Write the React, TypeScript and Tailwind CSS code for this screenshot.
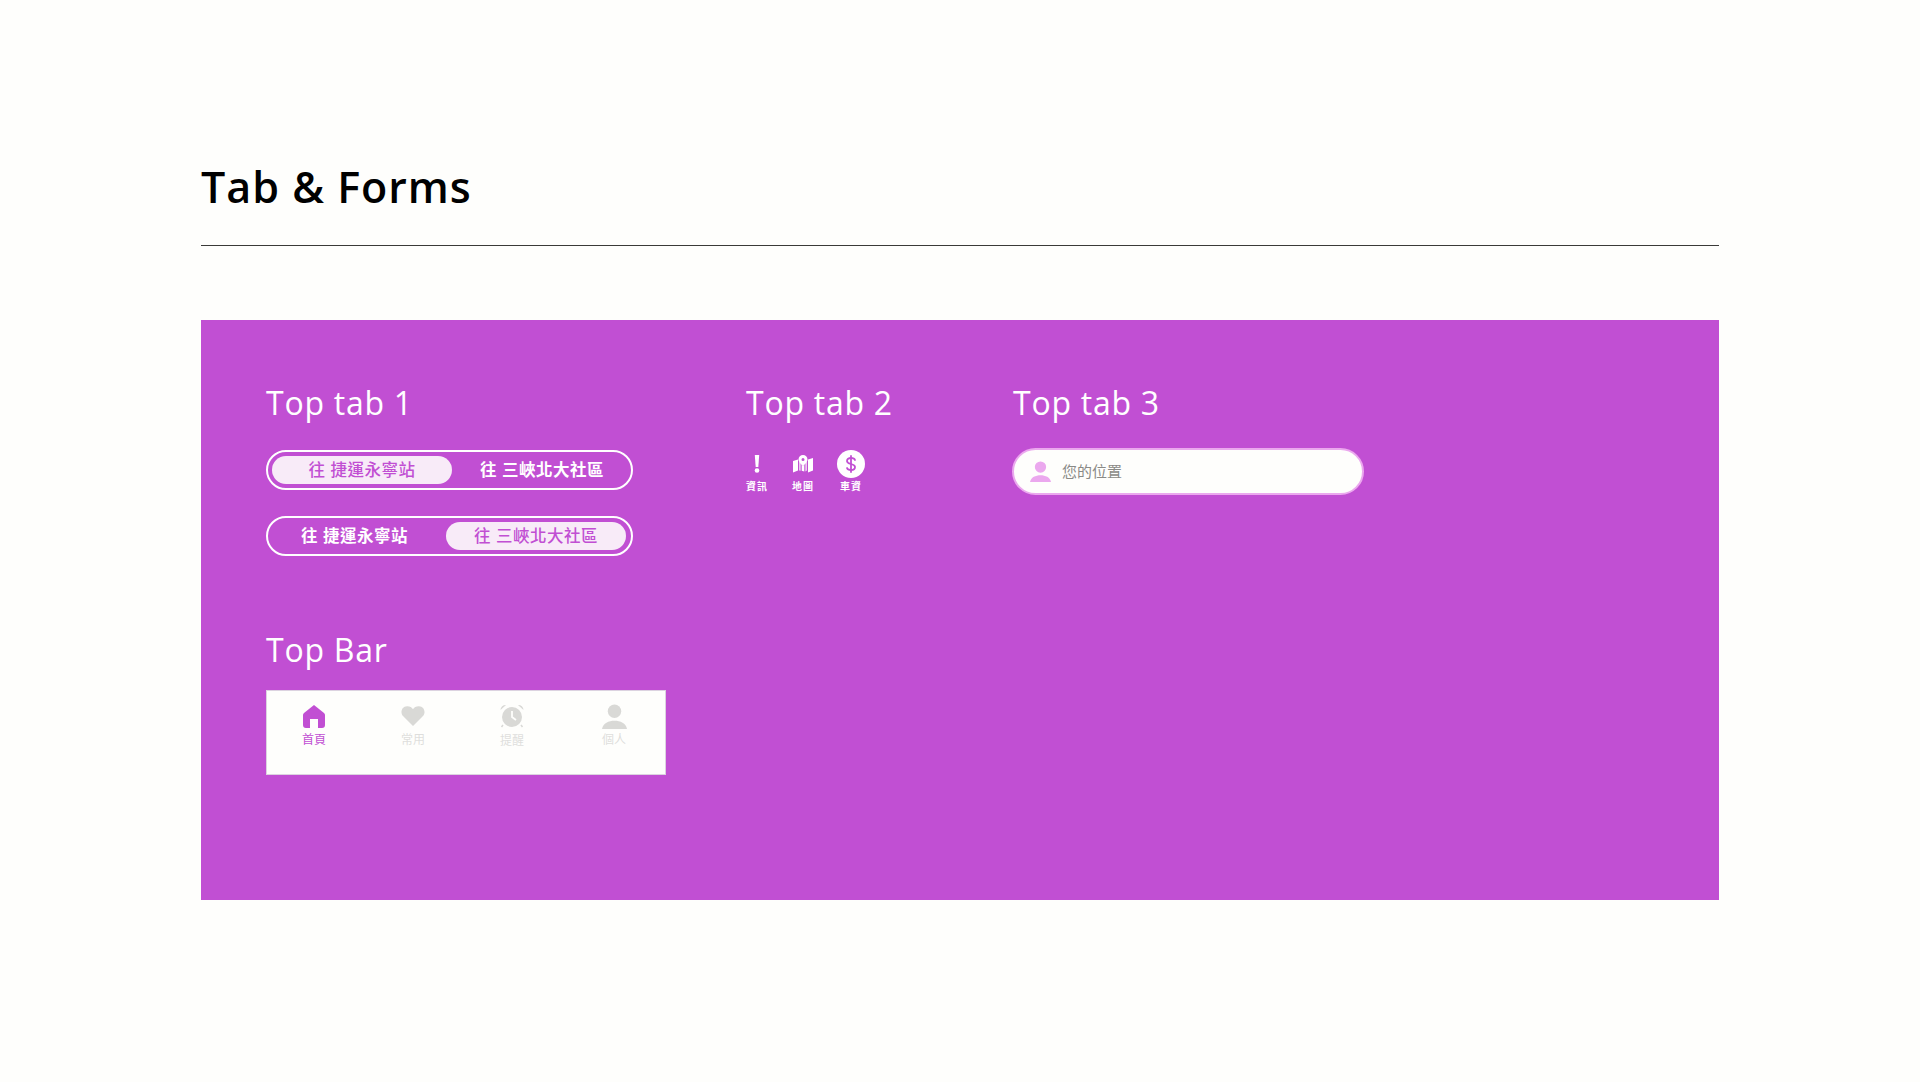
const cjk = "font-['Open_Sans','Noto_Sans_CJK_TC',sans-serif]";

function RouteTabs({ active }: { active: 0 | 1 }) {
  const labels = ["往 捷運永寧站", "往 三峽北大社區"];
  return (
    <div className="flex h-10 w-[367px] items-center rounded-full border-2 border-white px-1">
      {labels.map((label, i) =>
        i === active ? (
          <div
            key={label}
            className={`flex h-7 w-[180px] shrink-0 items-center justify-center rounded-full bg-[#f8ebf8] text-[16.5px] font-medium tracking-[0.5px] text-[#c14fd3] ${i === 1 ? "-ml-[3px]" : ""}`}
          >
            {label}
          </div>
        ) : (
          <div
            key={label}
            className={`flex h-7 w-[180px] shrink-0 items-center justify-center text-[16.5px] font-bold tracking-[0.5px] text-white ${i === 0 ? "-ml-[3px] pr-[9px]" : ""}`}
          >
            {label}
          </div>
        ),
      )}
    </div>
  );
}

function HomeIcon() {
  return (
    <svg width="22" height="23" viewBox="0 0 22 23" fill="#c14fd3">
      <path d="M11 0 L21 8 Q22 9 22 10 V20 Q22 23 19 23 H15 V14 H7 V23 H3 Q0 23 0 20 V10 Q0 9 1 8 Z" />
    </svg>
  );
}

function HeartIcon() {
  return (
    <svg width="24" height="20" viewBox="0 0 24 20" fill="#d9d9d6">
      <path d="M12 20 L2 10 C-1 6.500 0.500 0.500 6 0.200 C8.500 0 10.800 1.200 12 3.200 C13.200 1.200 15.500 0 18 0.200 C23.500 0.500 25 6.500 22 10 Z" />
    </svg>
  );
}

function AlarmIcon() {
  return (
    <svg width="24" height="24" viewBox="0 0 24 24">
      <circle cx="12" cy="13" r="10" fill="#d9d9d6" />
      <path d="M0.500 6 A5 5 0 0 1 6 1 Z M23.500 6 A5 5 0 0 0 18 1 Z" fill="#d9d9d6" />
      <path d="M3 21 L1.500 23 M21 21 L22.500 23" stroke="#d9d9d6" strokeWidth="1.500" />
      <path d="M12 7 V13 L16 16" stroke="#fefefc" strokeWidth="1.800" fill="none" />
    </svg>
  );
}

function PersonIcon({ color, size }: { color: string; size: number }) {
  return (
    <svg width={size} height={size} viewBox="0 0 26 26" fill={color}>
      <circle cx="13" cy="7.500" r="7" />
      <path d="M0 26 C1 20 7 17.500 13 17.500 C19 17.500 25 20 26 26 Z" />
    </svg>
  );
}

function InfoTabs() {
  return (
    <div className="mt-[25px] -ml-px flex items-start text-white">
      <div className="flex w-[24px] flex-col items-center">
        <div className="flex h-7 items-center">
          <svg width="6" height="18" viewBox="0 0 6 18" fill="#fff">
            <path d="M0.800 0 H5.200 L4.300 12 H1.700 Z" />
            <circle cx="3" cy="15.500" r="2.300" />
          </svg>
        </div>
        <span className="mt-[2px] text-[10px] leading-[12px] font-bold tracking-[1px]">資訊</span>
      </div>
      <div className="ml-[22px] flex w-[24px] flex-col items-center">
        <div className="flex h-7 items-center">
          <svg width="20" height="18" viewBox="0 0 20 18" fill="#fff">
            <path d="M0 6 L5 4.500 V15.500 L0 17.500 Z M6.300 6 L7.500 7 V15.800 L6.300 15.500 Z M8.700 9 L10 11 L11.300 9 V16.500 L8.700 15.800 Z M12.500 7 L13.700 6 V15.500 L12.500 16.500 Z M15 4.500 L20 3 V15.500 L15 17.500 Z" />
            <path fillRule="evenodd" d="M10 0 A4.500 4.500 0 0 1 14.500 4.500 C14.500 7 11.500 9.500 10 11 C8.500 9.500 5.500 7 5.500 4.500 A4.500 4.500 0 0 1 10 0 Z M10 3 A1.500 1.500 0 1 0 10 6 A1.500 1.500 0 1 0 10 3 Z" />
          </svg>
        </div>
        <span className="mt-[2px] text-[10px] leading-[12px] font-bold tracking-[1px]">地圖</span>
      </div>
      <div className="ml-[22px] flex w-[28px] flex-col items-center">
        <div className="flex h-7 w-7 items-center justify-center rounded-full bg-white">
          <svg width="12" height="18" viewBox="0 0 12 18" fill="none" stroke="#c14fd3" strokeWidth="1.800" strokeLinecap="round">
            <path d="M6 1 V17" />
            <path d="M10 5 C9.500 3.500 8 3 6 3 C3.500 3 2 4.200 2 6 C2 10 10 8 10 12 C10 13.800 8.500 15 6 15 C4 15 2.500 14.500 2 13" />
          </svg>
        </div>
        <span className="mt-[2px] text-[10px] leading-[12px] font-bold tracking-[1px]">車資</span>
      </div>
    </div>
  );
}

function TopBar() {
  const items = [
    { label: "首頁", icon: <HomeIcon />, color: "text-[#c14fd3]", gap: "mt-[5px]", ml: "" },
    { label: "常用", icon: <HeartIcon />, color: "text-[#dededc]", gap: "mt-[5px]", ml: "ml-[49px]" },
    { label: "提醒", icon: <AlarmIcon />, color: "text-[#dededc]", gap: "mt-[6px]", ml: "ml-[49px]" },
    { label: "個人", icon: <PersonIcon color="#d9d9d6" size={25} />, color: "text-[#dededc]", gap: "mt-[5px]", ml: "ml-[52px]" },
  ];
  return (
    <div className="mt-[18px] flex h-[85px] w-[400px] items-start border border-[#dcd3e0] bg-[#fefefc] pt-[13px] pl-[22px]">
      {items.map((item) => (
        <div key={item.label} className={`flex w-[50px] flex-col items-center ${item.ml}`}>
          <div className="flex h-[24px] items-center">{item.icon}</div>
          <span className={`${item.gap} text-[12px] leading-[14px] font-normal ${item.color}`}>{item.label}</span>
        </div>
      ))}
    </div>
  );
}

export default function App() {
  return (
    <div className={`flex min-h-[1082px] flex-col bg-[#fefefc] px-[201px] pt-[157px] ${cjk}`}>
      <h1 className="text-[43px] leading-[60px] font-semibold tracking-[1px] text-black">Tab &amp; Forms</h1>
      <div className="mt-[28px] h-px bg-[#3a3a38]" />

      <div className="mt-[74px] h-[580px] bg-[#c14fd3] pt-[61px] pl-[65px]">
        <div className="flex items-start">
          <div className="w-[480px]">
            <h2 className="text-[32px] leading-[44px] font-normal tracking-[0.75px] text-white">Top tab 1</h2>
            <div className="mt-[25px] flex flex-col gap-[26px]">
              <RouteTabs active={0} />
              <RouteTabs active={1} />
            </div>
          </div>
          <div className="w-[267px]">
            <h2 className="text-[32px] leading-[44px] font-normal tracking-[0.75px] text-white">Top tab 2</h2>
            <InfoTabs />
          </div>
          <div>
            <h2 className="text-[32px] leading-[44px] font-normal tracking-[0.75px] text-white">Top tab 3</h2>
            <div className="mt-[23px] -ml-px flex h-[47px] w-[352px] items-center rounded-full border-2 border-[#eba8ee] bg-[#fefefc] pl-[16px]">
              <PersonIcon color="#eba8ee" size={21} />
              <span className="ml-[11px] text-[15px] text-[#8a8a86]">您的位置</span>
            </div>
          </div>
        </div>

        <h2 className="mt-[72px] text-[32px] leading-[44px] font-normal tracking-[0.75px] text-white">Top Bar</h2>
        <TopBar />
      </div>
    </div>
  );
}
